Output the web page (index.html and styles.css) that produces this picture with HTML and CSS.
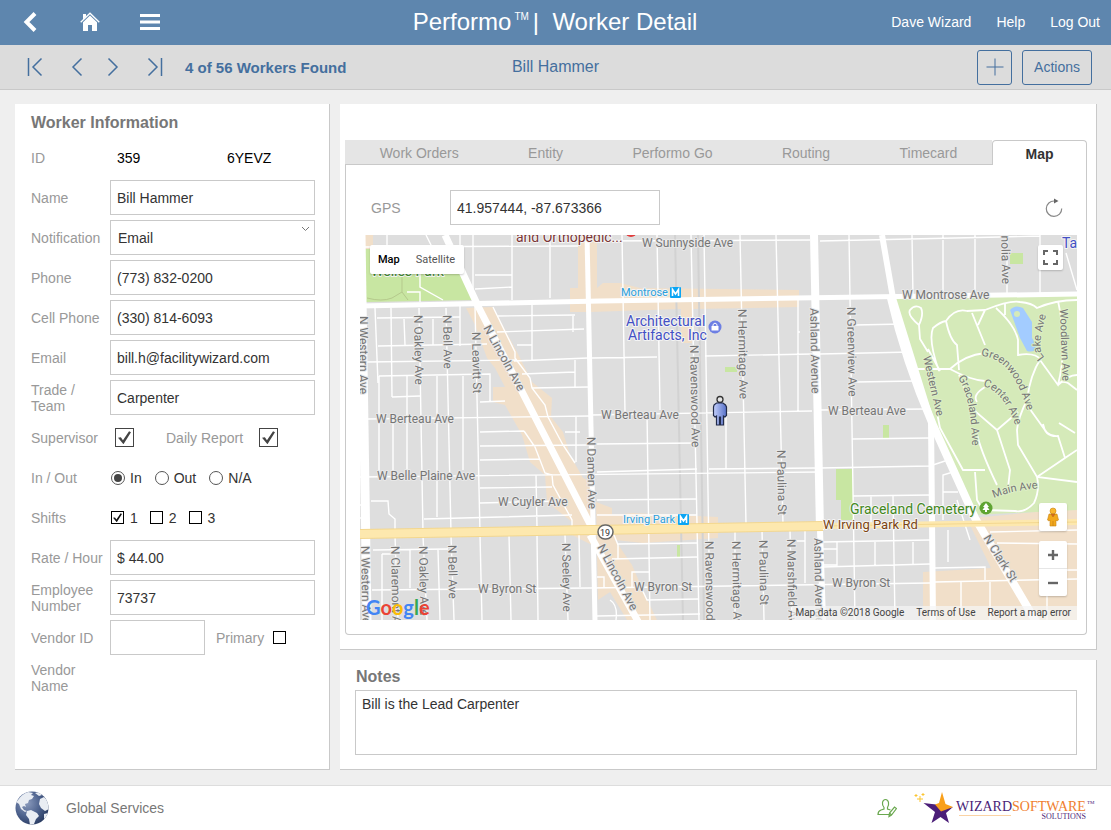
FILE: index.html
```html
<!DOCTYPE html>
<html lang="en">
<head>
  <meta charset="UTF-8">
  <meta name="viewport" content="width=device-width, initial-scale=1">
  <title>Performo | Worker Detail</title>
  <link rel="stylesheet" href="styles.css">
</head>
<body>
  <header class="topbar">
    <nav class="topbar-icons">
      <button type="button" aria-label="Back">
        <svg width="20" height="20" viewBox="0 0 20 20"><path d="M15 1.500L6.500 10l8.500 8.500" fill="none" stroke="#fff" stroke-width="4"/></svg>
      </button>
      <button type="button" aria-label="Home">
        <svg width="20" height="20" viewBox="0 0 20 20"><path d="M.7 10.300L10 1.200l9.300 9.100" fill="none" stroke="#fff" stroke-width="1.300"/><path d="M3 2h3v2.500L3 7.500zM10 3.500l7 6.800V19h-5v-6H8v6H3v-8.700z" fill="#fff"/></svg>
      </button>
      <button type="button" aria-label="Menu">
        <svg width="20" height="20" viewBox="0 0 20 20"><path d="M0 3.500h20M0 10h20M0 16.500h20" stroke="#fff" stroke-width="3"/></svg>
      </button>
    </nav>
    <h1>Performo<sup>TM</sup>|&nbsp; Worker Detail</h1>
    <nav class="topbar-links">
      <a href="#">Dave Wizard</a>
      <a href="#">Help</a>
      <a href="#">Log Out</a>
    </nav>
  </header>

  <div class="toolbar">
    <div class="pager">
      <button type="button" aria-label="First"><svg width="20" height="20" viewBox="0 0 20 20"><path d="M3.500 1v18M16.500 1.500L8 10l8.500 8.500"/></svg></button>
      <button type="button" aria-label="Previous"><svg width="20" height="20" viewBox="0 0 20 20"><path d="M16.500 1.500L8 10l8.500 8.500"/></svg></button>
      <button type="button" aria-label="Next"><svg width="20" height="20" viewBox="0 0 20 20"><path d="M3.500 1.500L12 10l-8.500 8.500"/></svg></button>
      <button type="button" aria-label="Last"><svg width="20" height="20" viewBox="0 0 20 20"><path d="M16.500 1v18M3.500 1.500L12 10l-8.500 8.500"/></svg></button>
      <span class="count">4 of 56 Workers Found</span>
    </div>
    <span class="record-name">Bill Hammer</span>
    <div class="toolbar-actions">
      <button type="button" class="btn btn-add" aria-label="Add"><svg width="18" height="18" viewBox="0 0 18 18"><path d="M9 .5v17M.5 9h17"/></svg></button>
      <button type="button" class="btn">Actions</button>
    </div>
  </div>

  <main>
    <form class="panel worker">
      <h2>Worker Information</h2>
      <div class="row"><span class="label">ID</span><div class="ids"><span>359</span><span>6YEVZ</span></div></div>
      <div class="row"><label for="name">Name</label><input class="box" type="text" id="name" value="Bill Hammer"></div>
      <div class="row"><label for="notification">Notification</label>
        <div class="select-wrap">
          <select class="box" id="notification"><option>Email</option></select>
          <svg width="9" height="6" viewBox="0 0 9 6"><path d="M1 1l3.500 3.500L8 1" fill="none" stroke="#777"/></svg>
        </div>
      </div>
      <div class="row"><label for="phone">Phone</label><input class="box" type="text" id="phone" value="(773) 832-0200"></div>
      <div class="row"><label for="cell">Cell Phone</label><input class="box" type="text" id="cell" value="(330) 814-6093"></div>
      <div class="row"><label for="email">Email</label><input class="box" type="text" id="email" value="bill.h@facilitywizard.com"></div>
      <div class="row"><label for="trade">Trade /<br>Team</label><input class="box" type="text" id="trade" value="Carpenter"></div>
      <div class="row"><label for="supervisor">Supervisor</label>
        <div class="big-checks">
          <input type="checkbox" class="big" id="supervisor" checked>
          <label for="daily">Daily Report</label>
          <input type="checkbox" class="big" id="daily" checked>
        </div>
      </div>
      <div class="row"><span class="label">In / Out</span>
        <div class="options radios">
          <label><input type="radio" name="inout" checked>In</label>
          <label><input type="radio" name="inout">Out</label>
          <label><input type="radio" name="inout">N/A</label>
        </div>
      </div>
      <div class="row"><span class="label">Shifts</span>
        <div class="options shifts">
          <label><input type="checkbox" checked>1</label>
          <label><input type="checkbox">2</label>
          <label><input type="checkbox">3</label>
        </div>
      </div>
      <div class="row"><label for="rate">Rate / Hour</label><input class="box" type="text" id="rate" value="$ 44.00"></div>
      <div class="row"><label for="empno">Employee<br>Number</label><input class="box" type="text" id="empno" value="73737"></div>
      <div class="row"><label for="vendor">Vendor ID</label>
        <div class="vendor">
          <input class="box" type="text" id="vendor">
          <label for="primary">Primary</label>
          <input type="checkbox" id="primary">
        </div>
      </div>
      <div class="row"><span class="label">Vendor<br>Name</span></div>
    </form>

    <div class="side">
      <section class="panel detail">
        <div class="tabs">
          <button type="button">Work Orders</button>
          <button type="button">Entity</button>
          <button type="button">Performo Go</button>
          <button type="button">Routing</button>
          <button type="button">Timecard</button>
          <button type="button" class="active">Map</button>
        </div>
        <div class="tab-body">
          <div class="gps">
            <label for="gps">GPS</label>
            <input class="box" type="text" id="gps" value="41.957444, -87.673366">
            <button type="button" aria-label="Refresh"><svg width="18" height="20" viewBox="0 0 18 20"><path d="M9.500 3A7.700 7.700 0 1 0 16.700 10.500" fill="none" stroke="#888" stroke-width="1.200"/><path d="M9 .5L13.500 3 9 5.500z" fill="#666"/></svg></button>
          </div>

          <div class="map">
            <svg class="map-canvas" viewBox="360 235 717 385" preserveAspectRatio="xMidYMid slice">
              <rect x="0" y="235" width="1600" height="385" fill="#dedede"/>
              <!-- commercial areas -->
              <g fill="#f1dfc9">
                <path d="M466 308L493 307 517 352 532 382 552 398 551 417 563 432 570 455 583 478 592 482V545L572 535V522L547 502 545 475 530 462 522 435 505 405 493 402V387H505L495 368 487 358 475 325z"/>
                <path d="M578 235H597V288L603 283H620L640 288 799 290V307L692 309V343H681V309L590 312H570V288H578z"/>
                <path d="M596 502L612 508V515L633 513 718 517V538L643 543 615 540 632 565 645 595 657 620H627L610 592 598 600z"/>
                <path d="M973 518L1077 508V620H923V572L991 568 970 525z"/>
                <path d="M365 235h8v14h-8z"/>
              </g>
              <!-- parks and cemetery -->
              <path fill="#c8e6a2" d="M365 249H450L474 300 366 302zM1010 253h13v11h-13zM725 367h12v5h-12zM883 425h6v13h-6zM836 469h17v51h-12v-20h-5zM677 545h3v12h-3z"/>
              <path fill="#d5eab9" d="M895 297L1077 293V510L973 515 936 425 917 380z"/>
              <path fill="none" stroke="#b5c98c" d="M367 298q15 4 25 0l10-6 6 8M402 292V255"/>
              <path fill="#a3ccff" d="M1010 310q5-6 13-2l9 14v16l6 10q-5 5-11 3l-7-13z"/>
              <circle cx="1017" cy="314" r="3" fill="#d5eab9"/>
              <!-- rail -->
              <path fill="none" stroke="#d2d2d2" stroke-width="2" d="M675 235L683 620M698 235L704 620"/>
              <g fill="none" stroke="#fff" stroke-width="1.400">
                <!-- west side streets -->
                <path d="M365 247L578 246M387 235V248M426 235L432 247M460 235V250M473 235V290M512 235V300M550 235V298M420 249V287L443 300M407 292h13v10M475 275H512M475 289L512 287"/>
                <path d="M375 308L378 383M391 308L392 397M404 319L405 345M419 308L423 533M433 319V345M446 308L451 533M460 306V346M475 306L480 533"/>
                <path d="M377 318L460 317M378 346L487 344M367 362L516 360M379 376L490 374V402M392 397L420 396M368 419L590 416M480 402L505 401M498 316L575 315M497 332L584 329M517 345H532M514 361L588 358M522 374L575 372M532 388L588 387M532 305V361M575 360V387M573 315V332"/>
                <path d="M379 376V477M393 419V470M407 376V474M437 376V517M463 376V470M493 307L515 352V358L530 378 532 388 545 405 548 417 563 445 575 463M565 432H580M576 417V462"/>
                <path d="M480 432L524 431M480 446L590 445M480 460L540 459M360 477L820 472M480 488L552 487M480 503L562 501M424 519L572 515M371 501H388L389 514 395 519V533M536 475L537 527M524 431L535 447 545 473 552 475 553 485 572 520V527M360 505H366M360 518H366"/>
                <path d="M395 536L398 620M423 536L427 620M451 536L454 620M480 535L482 620M509 535L511 620M537 535L538 620M565 535L568 620M579 535L580 587M373 550L448 549M372 590L590 588 930 583M382 554V620M382 554H395M410 550V588M438 550L440 620"/>
                <!-- centre -->
                <path d="M597 241L810 240M622 235L625 412M657 235L660 410M691 235L699 620M704 235L710 620M740 235L746 524M776 235L783 524M798 300V411M592 358L657 357M705 356L812 354M592 415L812 411M647 412L650 620M726 412V469M709 469L817 468"/>
                <path d="M597 444L697 443M597 472L697 469M597 500L697 499M597 515H697M612 530L618 545V559M617 544L697 543M612 559L697 557M632 588V572H650M640 585L647 600 698 599M597 616L700 614M597 577H604V588M610 600q8 5 6 20M735 530V620M762 530L764 620M790 530L792 620M805 530V583M797 541H805"/>
                <!-- east side streets -->
                <path d="M820 241L1000 237 1040 236M849 235L855 620M912 235L913 297M943 235V297M975 235V297M1007 235V297M1040 235V297M1066 253L1077 290M855 325L904 324M820 354L912 352M856 382L915 381M820 410L927 409M798 332H800"/>
                <path d="M852 439L930 438M820 468L930 466 945 461M853 496L930 495M822 542L930 540M822 567L930 564M871 496V525M893 496L895 620M837 542V565H822M875 542V565M913 542V565M943 520V475L953 472M943 492H958M948 530V562M957 500L970 540M822 549H837"/>
                <path d="M990 532L1077 530M997 543L1077 544M935 568L985 567V580M935 582L1077 579M961 582V620M990 582V620M1047 582V620M1040 570H1077"/>
                <!-- cemetery paths -->
                <path stroke-width="1.800" d="M928 352L920 339 919 325Q907 315 910 310 915 304 921 308 924 314 919 325M939 371Q928 340 933 328 940 322 946 321 955 308 967 311L985 310Q1010 300 1020 302 1032 303 1037 308 1055 300 1077 300M946 321Q950 340 957 345L959 370M917 369L950 369Q965 355 985 353M972 313L985 345M985 310L978 325M996 308Q1015 325 1018 340V355Q1035 352 1041 360M1005 304V315M928 349L940 371M950 369Q970 380 985 381"/>
                <path stroke-width="1.800" d="M959 375Q968 400 976 412L997 430M985 387Q972 395 977 402M997 430L1018 412M1041 358Q1030 375 1027 400 1018 418 1017 430L1018 445 1037 477 1077 482M1040 360L1058 385Q1060 380 1068 383L1077 390M1058 385Q1068 375 1077 375M1058 385Q1068 345 1058 301M1027 405L1047 433M928 370L935 385M936 408L940 428 963 470 985 470M976 430Q980 450 997 485M997 430L1010 470 1008 488M1037 477L1065 458 1077 450M1075 433L1059 423M1065 458L1058 436Q1045 437 1043 424M1037 477Q1040 490 1034 503 1025 513 1015 511L984 510M975 472L977 500 984 512"/>
              </g>
              <!-- main roads -->
              <g fill="none" stroke="#fff">
                <path stroke-width="9" d="M361 235L367 620"/>
                <path stroke-width="5" d="M360 306L600 301 1077 294"/>
                <path stroke-width="7" d="M445 235L478 306 592 528M590 535L640 625"/>
                <path stroke-width="5" d="M587 235L595 620"/>
                <path stroke-width="8" d="M814 235L820 530"/>
                <path stroke-width="6" d="M820 530L823 620M882 235L893 298 931 420 933 620"/>
                <path stroke-width="8" d="M891 298Q905 360 933 425L975 518 1038 625"/>
              </g>
              <path fill="none" stroke="#f3d78f" stroke-width="10" d="M360 534L593 530 823 526"/>
              <path fill="none" stroke="#fde8ae" stroke-width="8" d="M360 534L593 530 823 526"/>
              <path fill="none" stroke="#fde8ae" stroke-width="6" d="M820 526L1077 522"/>
              <path fill="none" stroke="#f3d78f" d="M823 526L1077 522"/>

              <g class="street">
                <text x="376" y="423">W Berteau Ave</text>
                <text x="601" y="419">W Berteau Ave</text>
                <text x="828" y="415">W Berteau Ave</text>
                <text x="377" y="480">W Belle Plaine Ave</text>
                <text x="498" y="506">W Cuyler Ave</text>
                <text x="478" y="593">W Byron St</text>
                <text x="634" y="591">W Byron St</text>
                <text x="832" y="587">W Byron St</text>
                <text x="642" y="247">W Sunnyside Ave</text>
                <text x="902" y="299">W Montrose Ave</text>
                <text transform="translate(359 316) rotate(90)">N Western Ave</text>
                <text transform="translate(414 315) rotate(89)">N Oakley Ave</text>
                <text transform="translate(443 315) rotate(89)">N Bell Ave</text>
                <text transform="translate(472 332) rotate(89)">N Leavitt St</text>
                <text transform="translate(483 328) rotate(61)">N Lincoln Ave</text>
                <text transform="translate(587 437) rotate(89)">N Damen Ave</text>
                <text transform="translate(690 345) rotate(89)">N Ravenswood Ave</text>
                <text transform="translate(738 309) rotate(89)">N Hermitage Ave</text>
                <text transform="translate(810 308) rotate(89)">Ashland Avenue</text>
                <text transform="translate(847 307) rotate(89)">N Greenview Ave</text>
                <text transform="translate(1002 284) rotate(89)" text-anchor="end">Magnolia Ave</text>
                <text transform="translate(361 546) rotate(89)">N Western Ave</text>
                <text transform="translate(391 546) rotate(89)">N Claremont Ave</text>
                <text transform="translate(419 546) rotate(89)">N Oakley Ave</text>
                <text transform="translate(448 545) rotate(89)">N Bell Ave</text>
                <text transform="translate(562 543) rotate(89)">N Seeley Ave</text>
                <text transform="translate(597 547) rotate(62)">N Lincoln Ave</text>
                <text transform="translate(705 541) rotate(89)">N Ravenswood Ave</text>
                <text transform="translate(732 541) rotate(89)">N Hermitage Ave</text>
                <text transform="translate(759 540) rotate(89)">N Paulina St</text>
                <text transform="translate(777 450) rotate(89)">N Paulina St</text>
                <text transform="translate(787 539) rotate(89)">N Marshfield Ave</text>
                <text transform="translate(814 538) rotate(89)">Ashland Avenue</text>
                <text transform="translate(983 538) rotate(58)">N Clark St</text>
              </g>
              <g class="street path-name">
                <text transform="translate(923 357) rotate(77)">Western Ave</text>
                <text transform="translate(1060 309) rotate(88)">Woodlawn Ave</text>
                <path id="lake" d="M1045 357Q1035 352 1047 312" fill="none" stroke="none"/>
                <path id="graceland" d="M958 378Q972 398 972 450" fill="none" stroke="none"/>
                <path id="greenwood" d="M981 356Q1015 358 1029 418" fill="none" stroke="none"/>
                <path id="center" d="M983 386Q1005 392 1017 430" fill="none" stroke="none"/>
                <path id="main" d="M994 498Q1012 490 1044 488" fill="none" stroke="none"/>
                <text><textPath href="#lake">Lake Ave</textPath></text>
                <text><textPath href="#graceland">Graceland Ave</textPath></text>
                <text><textPath href="#greenwood">Greenwood Ave</textPath></text>
                <text><textPath href="#center">Center Ave</textPath></text>
                <text><textPath href="#main">Main Ave</textPath></text>
              </g>
              <g class="place">
                <text x="516" y="242" fill="#7b3636">and Orthopedic...</text>
                <text x="371" y="276" fill="#3f8d2a">Welles Park</text>
                <text x="626" y="326" fill="#4350c4">Architectural</text>
                <text x="628" y="340" fill="#4350c4">Artifacts, Inc</text>
                <text x="850" y="514" fill="#43881c">Graceland Cemetery</text>
                <text x="1062" y="248" fill="#4350c4">Ta</text>
                <text x="823" y="529" fill="#7c4410" class="small">W Irving Park Rd</text>
                <text x="621" y="296" fill="#2c9fdb" class="station">Montrose</text>
                <text x="623" y="523" fill="#2c9fdb" class="station">Irving Park</text>
              </g>
              <circle cx="631" cy="231" r="6" fill="#e03c3c"/>
              <g fill="#0ba5f4"><rect x="670" y="287" width="11" height="11" rx="1"/><rect x="678" y="514" width="11" height="11" rx="1"/></g>
              <path fill="none" stroke="#fff" stroke-width="1.600" d="M672.500 296V289.500L675.500 294 678.500 289.500V296M680.500 523V516.500L683.500 521 686.500 516.500V523"/>
              <circle cx="715" cy="327" r="6.500" fill="#6d7fe3"/>
              <path fill="#fff" d="M711.500 326h7v4.500h-7z"/><path fill="none" stroke="#fff" d="M713 326v-1.500q2-3 4 0v1.500"/>
              <circle cx="986" cy="508" r="6.500" fill="#5fa432"/>
              <path fill="#fff" d="M986 503l3 4h-1.500l2 3H987v2h-2v-2h-2.500l2-3H983z"/>
              <rect x="598" y="525" width="15" height="14" rx="7" fill="#fff" stroke="#666" stroke-width="1.500"/>
              <text x="605" y="536" class="shield">19</text>
              <!-- worker pin -->
              <linearGradient id="pin" x1="0" x2="1"><stop offset="0" stop-color="#c3cffb"/><stop offset="1" stop-color="#5670c8"/></linearGradient>
              <circle cx="720" cy="399.500" r="3" fill="#e5e5e5" stroke="#333" stroke-width="1.300"/>
              <path d="M714 405l2.500-2h6.500l2.500 2 1 2v8.500l-1.500 1.500-1.500-1v9h-3V417h-1v8H716.500v-9l-1.500 1-1.500-1.500v-8.500z" fill="url(#pin)" stroke="#222b4a" stroke-width="1.200"/>
            </svg>
            <div class="map-type"><button type="button" class="on">Map</button><button type="button">Satellite</button></div>
            <button type="button" class="map-btn fullscreen" aria-label="Full screen"><svg width="15" height="15" viewBox="0 0 15 15"><path d="M1 5V1h4M10 1h4v4M14 10v4h-4M5 14H1v-4" fill="none" stroke="#666" stroke-width="2"/></svg></button>
            <button type="button" class="map-btn pegman" aria-label="Street View"><svg width="12" height="20" viewBox="0 0 12 20"><path d="M2 7h8l1.500 6-1.500 1-1-1v6H3v-6l-1 1-1.500-1z" fill="#f2a81d" stroke="#c78316" stroke-width=".6"/><circle cx="6" cy="4" r="3" fill="#f9b62d" stroke="#c78316" stroke-width=".6"/><path d="M4 7h4L6 10zM6 14v5" fill="#d9622b" stroke="#b97712" stroke-width=".6"/></svg></button>
            <div class="zoom">
              <button type="button" aria-label="Zoom in"><svg width="10" height="10" viewBox="0 0 10 10"><path d="M5 0v10M0 5h10" stroke="#666" stroke-width="2.400"/></svg></button>
              <button type="button" aria-label="Zoom out"><svg width="10" height="10" viewBox="0 0 10 10"><path d="M0 5h10" stroke="#666" stroke-width="2.400"/></svg></button>
            </div>
            <div class="google"><span class="b">G</span><span class="r">o</span><span class="y">o</span><span class="b">g</span><span class="g">l</span><span class="r">e</span></div>
            <div class="credits"><span>Map data ©2018 Google</span><a href="#">Terms of Use</a><a href="#">Report a map error</a></div>
          </div>
        </div>
      </section>

      <section class="panel notes">
        <h2><label for="notes">Notes</label></h2>
        <textarea id="notes">Bill is the Lead Carpenter</textarea>
      </section>
    </div>
  </main>

  <footer>
    <svg width="34" height="34" viewBox="0 0 34 34">
      <defs><radialGradient id="sea" cx=".35" cy=".35" r=".75"><stop offset="0" stop-color="#8b9bbd"/><stop offset=".55" stop-color="#4c618c"/><stop offset="1" stop-color="#25365c"/></radialGradient>
      <clipPath id="ball"><circle cx="17" cy="17" r="16.500"/></clipPath></defs>
      <circle cx="17" cy="17" r="16.500" fill="url(#sea)"/>
      <path clip-path="url(#ball)" fill="#e9edf3" d="M3 9Q7 3 13 1l5 1-2 2 3 1-2 3-3 1-1 3-3 1 1 3-2-1-2 1 2 3 3 1-2 1-4-3-2-5-3-2zM12 20l4-1 6 3 2 3-3 3-2 5-4 1-1-6-3-4zM20 2l4-1 3 3-3 1zM25 8l4-2 4 4 1 8-4 2-4-3-2-4zM29 23l4-1-2 5-2 1z"/>
    </svg>
    <span class="site">Global Services</span>
    <svg class="user-edit" width="20" height="20" viewBox="0 0 20 20" fill="none" stroke="#6aa84f" stroke-width="1.200"><path d="M12 16.500H1q0-3.500 3-4.500l3-1V9.500Q5 7 5.500 4.500 6 1.500 8.500 1.500T11.500 4.500Q12 7 10.500 9.500V11l3 1"/><path d="M12 18.500l.5-3.500 5-6 2 1.500-5 6.500zM12.500 15l2 2"/></svg>
    <svg class="logo" width="184" height="34" viewBox="0 0 184 34">
      <path fill="#4b1e78" d="M11.500 12L24 13.500 30 18 41 16 34 22 37 32 28.500 26 19.500 32 23 21z"/>
      <path fill="#f9a01b" d="M30 1L33.500 13 41 16 29 20.500 23 13.500 27 12z"/>
      <path stroke="#fbc531" d="M8 5v6M5 8h6M4 3v3M2.500 4.500h3M11 2v3M9.500 3.500h3"/>
      <text x="44" y="20" fill="#4b1e78">WIZARD<tspan fill="#f08030">SOFTWARE</tspan></text>
      <text x="175" y="13" class="tm" fill="#4b1e78">TM</text>
      <path d="M47 24.500h52" stroke="#fbd3a4"/>
      <text x="174" y="28" class="sub" fill="#4b1e78" text-anchor="end">SOLUTIONS</text>
    </svg>
  </footer>
</body>
</html>
```

FILE: styles.css
```css
*{
  box-sizing:border-box;
}
html,body{
  height:100%;
}
body{
  margin:0;
  display:flex;
  flex-direction:column;
  background:#efefef;
  font-family:"Liberation Sans", Arial, sans-serif;
  font-size:14px;
  color:#333;
}
h1,h2{
  margin:0;
}
button,input,select,textarea{
  font:inherit;
  color:inherit;
  margin:0;
}
button{
  display:flex;
  align-items:center;
  justify-content:center;
  padding:0;
  border:none;
  background:none;
  cursor:pointer;
}
a{
  color:inherit;
  text-decoration:none;
}

/* top bars */
.topbar,.toolbar{
  display:grid;
  grid-template-columns:1fr auto 1fr;
  align-items:center;
}
.topbar{
  height:45px;
  padding:0 11px 0 10px;
  background:#5e86ae;
  color:#fff;
}
.topbar-icons{
  display:flex;
  gap:40px;
  padding-left:10px;
}
.topbar h1{
  font-size:24px;
  font-weight:normal;
  line-height:44px;
}
.topbar sup{
  font-size:10px;
  line-height:10px;
  vertical-align:10px;
  margin:0 4px 0 3px;
}
.topbar-links{
  display:flex;
  justify-content:flex-end;
  gap:25px;
}
.toolbar{
  height:46px;
  padding:1px 19px 0 19px;
  background:#dcdcdc;
  border-bottom:1px solid #c9c9c9;
  color:#446f9e;
}
.pager{
  display:flex;
  align-items:center;
  gap:20px;
  padding-left:6px;
}
.toolbar svg{
  fill:none;
  stroke:#446f9e;
  stroke-width:1.5;
}
.count{
  font-weight:bold;
  font-size:15px;
}
.record-name{
  font-size:16px;
}
.toolbar-actions{
  display:flex;
  justify-content:flex-end;
  gap:10px;
}
.btn{
  height:35px;
  padding:0 11px;
  border:1px solid #446f9e;
  border-radius:3px;
}
.btn-add{
  width:35px;
  padding:0;
}
.toolbar .btn-add svg{
  stroke-width:1;
}

/* panels */
main{
  flex:1;
  display:grid;
  grid-template-columns:315px 1fr;
  gap:10px;
  padding:14px 14px 15px 15px;
}
.panel{
  background:#fff;
  border-right:1px solid #c9c9c9;
  border-bottom:1px solid #c9c9c9;
}
.panel h2{
  font-size:16px;
  line-height:35px;
  color:#777;
}
.worker{
  padding:1px 14px 0 16px;
}
.row{
  display:grid;
  grid-template-columns:79px 1fr;
  align-items:center;
  height:35px;
  margin-bottom:5px;
}
.row > label,.label,.big-checks label,.vendor label,.gps label{
  color:#999;
  line-height:16px;
}
.ids{
  display:grid;
  grid-template-columns:110px 1fr;
  padding-left:7px;
  color:#000;
}
.box{
  width:100%;
  height:35px;
  padding:0 6px;
  border:1px solid #c9c9c9;
  border-radius:0;
  background:#fff;
  appearance:none;
  outline:none;
}
.select-wrap{
  position:relative;
}
.select-wrap .box{
  padding-left:7px;
}
.select-wrap svg{
  position:absolute;
  top:6px;
  right:5px;
  pointer-events:none;
}
input[type=checkbox],input[type=radio]{
  appearance:none;
  display:grid;
  place-items:center;
  width:13px;
  height:13px;
  border:1px solid #000;
}
input[type=checkbox]:checked:before{
  content:'';
  width:9px;
  height:9px;
  background:#111;
  clip-path:polygon(0 50%, 22% 45%, 38% 68%, 85% 0, 100% 8%, 42% 100%);
}
input[type=checkbox].big{
  width:19px;
  height:19px;
  border-color:#444;
}
input[type=checkbox].big:checked:before{
  width:13px;
  height:13px;
  background:#444;
}
.big-checks{
  display:grid;
  grid-template-columns:51px 93px 1fr;
  align-items:center;
  padding-left:5px;
}
.options{
  display:flex;
  padding-left:1px;
}
.options label{
  display:flex;
  align-items:center;
}
.radios{
  gap:13px;
}
.radios label{
  gap:5px;
}
input[type=radio]{
  width:14px;
  height:14px;
  border-color:#555;
  border-radius:50%;
}
input[type=radio]:checked:before{
  content:'';
  width:8px;
  height:8px;
  border-radius:50%;
  background:#444;
}
.shifts{
  gap:12px;
}
.shifts label{
  gap:6px;
}
.vendor{
  display:grid;
  grid-template-columns:95px 46px 13px;
  gap:11px;
  align-items:center;
}

/* right column */
.side{
  display:flex;
  flex-direction:column;
  gap:10px;
}
.detail{
  padding:36px 9px 14px 5px;
}
.tabs{
  display:flex;
  height:25px;
}
.tabs button{
  flex:1 1 auto;
  padding-top:2px;
  background:#e5e5e5;
  border-bottom:1px solid #c9c9c9;
  color:#999;
}
.tabs .active{
  flex:0 0 95px;
  padding-top:1px;
  background:#fff;
  border:1px solid #c9c9c9;
  border-bottom:none;
  border-radius:4px 4px 0 0;
  color:#333;
  font-weight:bold;
}
.tab-body{
  padding:25px 9px 14px 14px;
  border:1px solid #c9c9c9;
  border-top:none;
  border-radius:0 0 4px 4px;
}
.gps{
  display:grid;
  grid-template-columns:79px 210px 1fr;
  align-items:center;
  padding:0 14px 0 11px;
  margin-bottom:10px;
}
.gps button{
  justify-self:end;
}
.map{
  position:relative;
  height:385px;
  overflow:hidden;
  font-family:Roboto, sans-serif;
}
.map-canvas{
  display:block;
  width:100%;
  height:100%;
}
.map-canvas text{
  paint-order:stroke;
  stroke-linejoin:round;
}
.street{
  font-size:12px;
  fill:#757575;
  stroke:#e8e8e8;
  stroke-width:2px;
}
.path-name{
  font-size:11px;
  stroke:#deefc8;
}
.place{
  font-size:14px;
  stroke:#f4f4f4;
  stroke-width:2px;
}
.place .small{
  font-size:13px;
}
.place .station{
  font-size:11px;
}
.shield{
  font-size:9px;
  text-anchor:middle;
  fill:#333;
}
.map-type,.map-btn,.zoom{
  position:absolute;
  background:#fff;
  border-radius:2px;
  box-shadow:0 1px 2px rgba(0,0,0,.2);
}
.map-type{
  display:flex;
  top:10px;
  left:10px;
  height:29px;
  padding:0 9px 0 8px;
  gap:16px;
  font-size:11px;
  color:#555;
}
.map-type .on{
  font-weight:500;
  color:#000;
}
.fullscreen{
  top:10px;
  right:14px;
  width:25px;
  height:25px;
}
.pegman{
  right:10px;
  bottom:89px;
  width:28px;
  height:28px;
}
.zoom{
  right:10px;
  bottom:24px;
  width:28px;
}
.zoom button{
  width:28px;
  height:27px;
}
.zoom button + button{
  border-top:1px solid #e6e6e6;
  height:28px;
}
.google{
  position:absolute;
  left:6px;
  bottom:1px;
  font-family:Lato, sans-serif;
  font-size:20px;
  line-height:24px;
  font-weight:bold;
}
.google .b{
  color:#4285f4;
}
.google .r{
  color:#ea4335;
}
.google .y{
  color:#fbbc05;
}
.google .g{
  color:#34a853;
}
.credits{
  position:absolute;
  right:0;
  bottom:0;
  display:flex;
  gap:12px;
  padding:0 6px 0 3px;
  background:rgba(245,245,245,.7);
  font-size:10px;
  line-height:14px;
  color:#444;
}
.notes{
  flex:1;
  display:flex;
  flex-direction:column;
  padding:7px 19px 14px 15px;
}
.notes h2{
  line-height:20px;
  padding:0 0 3px 1px;
}
.notes textarea{
  flex:1;
  min-height:65px;
  width:100%;
  padding:5px 6px;
  border:1px solid #c9c9c9;
  resize:none;
  outline:none;
}

footer{
  display:flex;
  align-items:center;
  height:45px;
  padding:0 15px;
  background:#fff;
  border-top:1px solid #ddd;
}
.site{
  margin:0 auto 0 17px;
  color:#777;
}
.user-edit{
  margin-right:15px;
}
.logo{
  overflow:visible;
  font-family:"Liberation Serif", serif;
  font-size:14px;
}
.logo .sub{
  font-size:8px;
}
.logo .tm{
  font-size:5px;
}
```
